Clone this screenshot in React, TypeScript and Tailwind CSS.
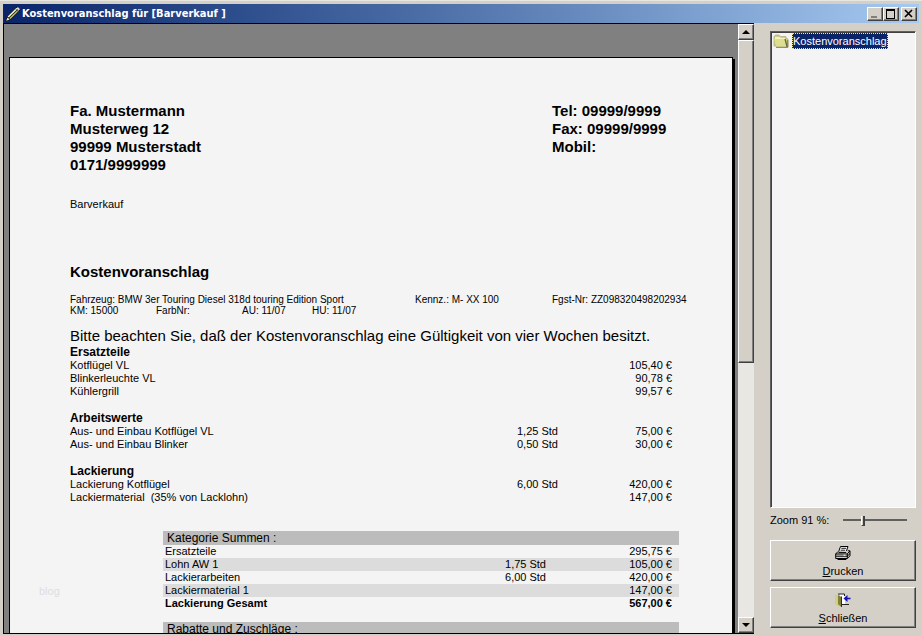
import { ReactNode } from 'react';
import clsx from 'clsx';

interface Position {
  name: string;
  hours?: string;
  price: string;
}

interface Section {
  title: string;
  positions: Position[];
}

const SECTIONS: Section[] = [
  {
    title: 'Ersatzteile',
    positions: [
      { name: 'Kotflügel VL', price: '105,40 €' },
      { name: 'Blinkerleuchte VL', price: '90,78 €' },
      { name: 'Kühlergrill', price: '99,57 €' },
    ],
  },
  {
    title: 'Arbeitswerte',
    positions: [
      { name: 'Aus- und Einbau Kotflügel VL', hours: '1,25 Std', price: '75,00 €' },
      { name: 'Aus- und Einbau Blinker', hours: '0,50 Std', price: '30,00 €' },
    ],
  },
  {
    title: 'Lackierung',
    positions: [
      { name: 'Lackierung Kotflügel', hours: '6,00 Std', price: '420,00 €' },
      { name: 'Lackiermaterial  (35% von Lacklohn)', price: '147,00 €' },
    ],
  },
];

const SUMS: Position[] = [
  { name: 'Ersatzteile', price: '295,75 €' },
  { name: 'Lohn AW 1', hours: '1,75 Std', price: '105,00 €' },
  { name: 'Lackierarbeiten', hours: '6,00 Std', price: '420,00 €' },
  { name: 'Lackiermaterial 1', price: '147,00 €' },
];

/** Raised edge shared by buttons and the scroll thumb */
const RAISED =
  'bg-[#d4d0c8] border border-t-white border-l-white border-r-[#404040] border-b-[#404040] shadow-[inset_-1px_-1px_0_#808080]';

const PencilIcon = () => (
  <svg viewBox="0 0 16 16" className="h-4 w-4" aria-hidden="true">
    <path d="M0.5 15.5l1.5-5L11.5 0.8l3.7 3.4-9.4 9.6z" fill="#101010" />
    <path d="M3.2 11L12 2.4" stroke="#f4f4c8" strokeWidth="1.6" />
    <path d="M4.8 12.6l8.6-8.4" stroke="#b8bc6c" strokeWidth="1.5" />
    <path d="M1.2 14.8l1.3-3.4 2.2 2.2z" fill="#f0e8c0" />
    <path d="M11.6 2.4l1.3-1.3 2.1 2.1-1.3 1.3z" fill="#d8d8e4" />
    <path d="M10.5 3l2.4 2.3" stroke="#303030" strokeWidth="0.8" />
  </svg>
);

const FolderIcon = () => (
  <svg viewBox="0 0 16 16" className="h-4 w-4" aria-hidden="true">
    <path d="M1 3.5L2.5 2H6l1.5 1.5H13V5l2 1v8h-1L1 13z" fill="#d0d080" stroke="#a8a878" strokeWidth="0.7" />
    <path d="M2 4h4.5l1 1H12v2L2 6z" fill="#f4f4c0" />
    <path d="M1 6h10.5l2 8H3.5z" fill="#dede90" />
    <path d="M12 6l2.2 8" stroke="#66663c" strokeWidth="1.3" />
    <path d="M3 14.3h11.8V7" fill="none" stroke="#77775c" />
  </svg>
);

const PrinterIcon = () => (
  <svg viewBox="0 0 16 14" className="h-[14px] w-4" aria-hidden="true">
    <path d="M5.5 0.5h7.5l-2 5.5H3.5z" fill="#fff" stroke="#000" />
    <path d="M6.3 2.3h4.8M5.6 4.2h4.6" stroke="#000" strokeWidth="0.9" />
    <path d="M3 5.5L0.7 8v4.5h11.6L15 9.8V4.8h-2.2" fill="#d4d0c8" stroke="#000" />
    <path d="M0.7 8h11.5L15 5M12.3 8v4.5M1 10.2h11.3L15 7.5" fill="none" stroke="#000" />
    <path d="M2.5 13.5h8.8M3.5 6.6h7.7" stroke="#000" />
    <path d="M8.5 9.2h2" stroke="#fff" />
  </svg>
);

const ExitIcon = () => (
  <svg viewBox="0 0 18 14" className="h-[14px] w-[18px]" aria-hidden="true">
    <path d="M6 1h5v10H6z" fill="#fff" />
    <path d="M1 1l4.5 2.5V14L1 11z" fill="#d0d080" />
    <path d="M4 2l3.5 2v10L4 11.2z" fill="#80803c" />
    <path d="M7.5 3.5V14" stroke="#30301c" />
    <path d="M4 1h6.5v2M8 11.5h7" fill="none" stroke="#202020" />
    <path d="M11 5.5h5.5" stroke="#1414b4" strokeWidth="1.6" />
    <path d="M9.5 5.5l4-3.5v7z" fill="#1414b4" />
  </svg>
);

const CaptionButton: React.FC<{ label: string; className?: string; children: ReactNode }> = ({
  label,
  className,
  children,
}) => (
  <button
    type="button"
    aria-label={label}
    className={clsx('flex h-[14px] w-4 items-center justify-center', RAISED, className)}
  >
    <svg viewBox="0 0 12 10" className="h-[10px] w-3" fill="none" stroke="#000" shapeRendering="crispEdges" aria-hidden="true">
      {children}
    </svg>
  </button>
);

const TitleBar = () => (
  <header className="flex h-[19px] shrink-0 items-center bg-linear-to-r from-[#0a246a] to-[#a6caf0] pl-[2px] pr-[2px]">
    <PencilIcon />
    <h1 className="ml-[1px] flex-1 whitespace-nowrap font-['DejaVu_Sans_Condensed','DejaVu_Sans',sans-serif] text-[11px] font-bold leading-[18px] text-white">
      Kostenvoranschlag für [Barverkauf ]
    </h1>
    <CaptionButton label="Minimieren">
      <path d="M2 8h6" stroke="#808080" strokeWidth="2" />
    </CaptionButton>
    <CaptionButton label="Maximieren">
      <path d="M1.5 1v8.5h8V1" />
      <path d="M1 1h9" strokeWidth="2" />
    </CaptionButton>
    <CaptionButton label="Fenster schließen" className="ml-[2px]">
      <path d="M2 1l7 7M9 1L2 8" strokeWidth="1.6" shapeRendering="auto" />
    </CaptionButton>
  </header>
);

const ScrollButton: React.FC<{ label: string; points: string }> = ({ label, points }) => (
  <button type="button" aria-label={label} className={clsx('flex h-4 w-full shrink-0 items-center justify-center', RAISED)}>
    <svg viewBox="0 0 8 4" className="h-1 w-2" aria-hidden="true">
      <polygon points={points} />
    </svg>
  </button>
);

const ScrollBar = () => (
  <div className="flex w-4 shrink-0 flex-col bg-[#e9e7e3]">
    <ScrollButton label="Nach oben" points="0,4 4,0 8,4" />
    <div className="min-h-0 flex-1">
      <div className={clsx('h-[56%]', RAISED)} />
    </div>
    <ScrollButton label="Nach unten" points="0,0 4,4 8,0" />
  </div>
);

const PositionsTable = () => (
  <table className="w-full table-fixed border-collapse whitespace-pre text-[11px] leading-[13px]">
    <colgroup>
      <col />
      <col className="w-[120px]" />
      <col className="w-[121px]" />
    </colgroup>
    {SECTIONS.map((section, index) => (
      <tbody key={section.title}>
        {index > 0 && (
          <tr className="h-[14px]">
            <td colSpan={3} />
          </tr>
        )}
        <tr>
          <th colSpan={3} className="text-left text-[12px] leading-[13px] font-bold">
            {section.title}
          </th>
        </tr>
        {section.positions.map((position) => (
          <tr key={position.name}>
            <td>{position.name}</td>
            <td className="text-right">{position.hours}</td>
            <td className="pr-[7px] text-right">{position.price}</td>
          </tr>
        ))}
      </tbody>
    ))}
  </table>
);

const SumsTable = () => (
  <div className="mt-[27px] pl-[93px]">
    <table className="w-full table-fixed border-collapse whitespace-nowrap text-[11px] leading-[13px]">
      <colgroup>
        <col />
        <col className="w-[120px]" />
        <col className="w-[133px]" />
      </colgroup>
      <tbody>
        <tr className="bg-[#bcbcbc]">
          <th colSpan={3} className="pl-1 text-left text-[12px] leading-[14px] font-normal">
            Kategorie Summen :
          </th>
        </tr>
        {SUMS.map((sum) => (
          <tr key={sum.name} className="even:bg-[#f4f4f4] odd:bg-[#dcdcdc]">
            <td className="pl-[2px]">{sum.name}</td>
            <td className="text-right">{sum.hours}</td>
            <td className="pr-[7px] text-right">{sum.price}</td>
          </tr>
        ))}
        <tr className="font-bold">
          <td className="pl-[2px]">Lackierung Gesamt</td>
          <td />
          <td className="pr-[7px] text-right">567,00 €</td>
        </tr>
        <tr className="h-3">
          <td colSpan={3} />
        </tr>
        <tr className="bg-[#bcbcbc]">
          <th colSpan={3} className="pl-1 text-left text-[12px] leading-[14px] font-normal">
            Rabatte und Zuschläge :
          </th>
        </tr>
      </tbody>
    </table>
  </div>
);

/** The estimate sheet; it runs on below the visible area */
const Paper = () => (
  <article className="min-h-[1000px] border border-black bg-[#f4f4f4] pt-11 pr-[53px] pl-[60px] text-black shadow-[2px_2px_0_#000]">
    <div className="grid grid-cols-[482fr_127fr] text-[15px] leading-[18px] font-bold whitespace-nowrap">
      <address className="not-italic">
        Fa. Mustermann
        <br />
        Musterweg 12
        <br />
        99999 Musterstadt
        <br />
        0171/9999999
      </address>
      <p>
        Tel: 09999/9999
        <br />
        Fax: 09999/9999
        <br />
        Mobil:
      </p>
    </div>

    <p className="mt-6 text-[11px] leading-[13px]">Barverkauf</p>

    <h2 className="mt-[52px] text-[15px] leading-[18px] font-bold">Kostenvoranschlag</h2>

    {/* Vehicle data */}
    <div className="mt-[13px] grid grid-cols-[minmax(0,86fr)_minmax(0,86fr)_minmax(0,70fr)_minmax(0,103fr)_minmax(0,137fr)_minmax(0,127fr)] text-[10px] leading-[11px] whitespace-nowrap">
      <span className="col-span-4">Fahrzeug: BMW 3er Touring Diesel 318d touring Edition Sport</span>
      <span>Kennz.: M- XX 100</span>
      <span>Fgst-Nr: ZZ098320498202934</span>
      <span>KM: 15000</span>
      <span>FarbNr:</span>
      <span>AU: 11/07</span>
      <span>HU: 11/07</span>
    </div>

    <p className="mt-[10px] text-[15px] leading-5 whitespace-nowrap">
      Bitte beachten Sie, daß der Kostenvoranschlag eine Gültigkeit von vier Wochen besitzt.
    </p>

    <PositionsTable />
    <SumsTable />
  </article>
);

const Preview = () => (
  <main className="flex min-w-0 flex-1 border-t border-b border-l border-black bg-[#808080]">
    <div className="relative min-w-0 flex-1 overflow-hidden pt-[33px] pr-[5px] pl-[5px]">
      <Paper />
      <span className="absolute bottom-[35px] left-[35px] text-[11px] leading-[13px] text-[#dedede]">blog</span>
    </div>
    <ScrollBar />
  </main>
);

const ActionButton: React.FC<{ icon: ReactNode; hotkey: string; rest: string }> = ({ icon, hotkey, rest }) => (
  <button
    type="button"
    className={clsx('flex h-[41px] w-full flex-col items-center justify-end gap-1 pb-[2px] text-[11px] leading-[14px]', RAISED)}
  >
    {icon}
    <span>
      <u>{hotkey}</u>
      {rest}
    </span>
  </button>
);

const Sidebar = () => (
  <aside className="flex w-[146px] shrink-0 flex-col pt-2 pb-[6px]">
    <ul className="min-h-0 flex-1 border border-t-[#606060] border-l-[#606060] border-r-white border-b-white bg-[#f4f4f4] p-[1px] shadow-[inset_1px_1px_0_#404040]">
      <li className="flex items-center gap-[3px] pl-[1px]">
        <FolderIcon />
        <button
          type="button"
          className="border border-dotted border-[#f0e8a0] bg-[#0a246a] text-[11px] leading-[14px] text-white"
        >
          Kostenvoranschlag
        </button>
      </li>
    </ul>

    <div className="flex h-8 shrink-0 items-center justify-between pr-[9px] pb-2 text-[11px] leading-[14px]">
      <label htmlFor="zoom">Zoom 91 %:</label>
      <input
        id="zoom"
        type="range"
        min={0}
        max={300}
        defaultValue={91}
        className="h-3 w-[64px] appearance-none bg-transparent [&::-webkit-slider-runnable-track]:h-[2px] [&::-webkit-slider-runnable-track]:border-t [&::-webkit-slider-runnable-track]:border-b [&::-webkit-slider-runnable-track]:border-t-[#606060] [&::-webkit-slider-runnable-track]:border-b-[#606060] [&::-webkit-slider-thumb]:-mt-1 [&::-webkit-slider-thumb]:h-[10px] [&::-webkit-slider-thumb]:w-1 [&::-webkit-slider-thumb]:appearance-none [&::-webkit-slider-thumb]:border-r-2 [&::-webkit-slider-thumb]:border-b [&::-webkit-slider-thumb]:border-l [&::-webkit-slider-thumb]:border-l-white [&::-webkit-slider-thumb]:border-[#404040] [&::-webkit-slider-thumb]:bg-[#d4d0c8]"
      />
    </div>

    <div className="flex shrink-0 flex-col gap-[6px]">
      <ActionButton icon={<PrinterIcon />} hotkey="D" rest="rucken" />
      <ActionButton icon={<ExitIcon />} hotkey="S" rest="chließen" />
    </div>
  </aside>
);

export default function App() {
  return (
    <div className="flex h-screen flex-col overflow-hidden bg-[#d4d0c8] px-[3px] pt-1 pb-[2px] font-['Liberation_Sans',Arial,sans-serif] text-black shadow-[inset_0_1px_0_#e8e6e0]">
      <TitleBar />
      <div className="flex min-h-0 flex-1 gap-4 pr-[3px]">
        <Preview />
        <Sidebar />
      </div>
    </div>
  );
}
